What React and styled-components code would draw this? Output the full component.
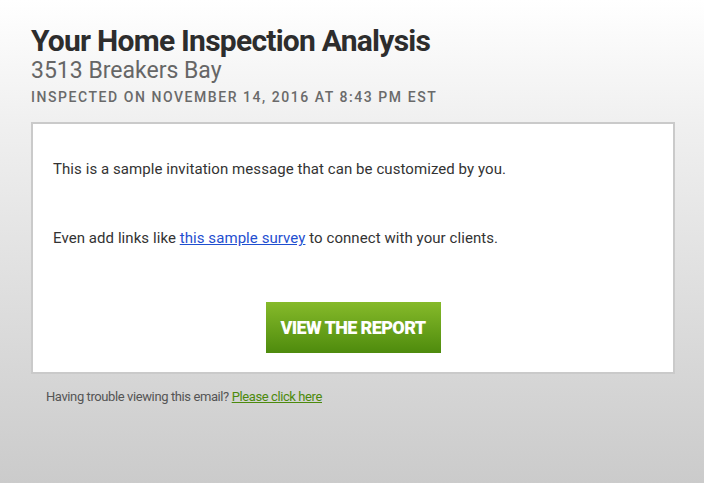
import React from 'react';
import styled, { createGlobalStyle } from 'styled-components';

const GlobalStyle = createGlobalStyle`
  html, body {
    margin: 0;
    padding: 0;
    height: 100%;
  }
  body {
    font-family: Roboto, "Liberation Sans", sans-serif;
    background: #cbcbcb;
  }
  #root {
    min-height: 100%;
  }
`;

const Page = styled.div`
  min-height: 483px;
  box-sizing: border-box;
  padding: 24px 29px 0 31px;
  background: linear-gradient(180deg, #ffffff 0%, #f0f0f0 25%, #cbcbcb 100%);
`;

const Header = styled.header`
  display: flex;
  flex-direction: column;
`;

const Title = styled.h1`
  margin: 0;
  font-size: 30px;
  line-height: 34px;
  font-weight: 700;
  color: #2d2d2d;
  letter-spacing: -0.75px;
`;

const Address = styled.h2`
  margin: 0;
  font-size: 23px;
  line-height: 26px;
  font-weight: 400;
  color: #666666;
  letter-spacing: 0;
`;

const Inspected = styled.p`
  margin: 3px 0 0;
  font-size: 14px;
  line-height: 20px;
  font-weight: 500;
  color: #6a6a6a;
  letter-spacing: 1.55px;
  text-transform: uppercase;
`;

const Card = styled.section`
  margin-top: 15px;
  height: 252px;
  box-sizing: border-box;
  border: 2px solid #cacaca;
  background: #ffffff;
  padding: 34px 20px 0 20px;
  display: flex;
  flex-direction: column;
`;

const Message = styled.p`
  margin: 0 0 ${p => p.$gap || 0}px;
  font-size: 15px;
  line-height: 22px;
  color: #333333;
  letter-spacing: 0.07px;
`;

const Link = styled.a`
  color: ${p => p.$green ? '#4c8a0c' : '#1f4fd0'};
  text-decoration: underline;
`;

const ButtonRow = styled.div`
  display: flex;
  justify-content: center;
  margin-top: 53px;
`;

const ReportButton = styled.a`
  display: flex;
  align-items: center;
  justify-content: center;
  width: 175px;
  height: 51px;
  background: linear-gradient(180deg, #86ba2a 0%, #4e8b0d 100%);
  color: #ffffff;
  font-size: 18px;
  font-weight: 900;
  letter-spacing: -0.6px;
  text-decoration: none;
`;

const Footer = styled.p`
  margin: 14px 0 0 15px;
  font-size: 13px;
  line-height: 18px;
  color: #555555;
  letter-spacing: -0.4px;
`;

const App = () => (
  <>
    <GlobalStyle />
    <Page>
      <Header>
        <Title>Your Home Inspection Analysis</Title>
        <Address>3513 Breakers Bay</Address>
        <Inspected>Inspected on November 14, 2016 at 8:43 PM EST</Inspected>
      </Header>
      <Card>
        <Message $gap={47}>This is a sample invitation message that can be customized by you.</Message>
        <Message>
          Even add links like <Link href="#">this sample survey</Link> to connect with your clients.
        </Message>
        <ButtonRow>
          <ReportButton href="#">VIEW THE REPORT</ReportButton>
        </ButtonRow>
      </Card>
      <Footer>
        Having trouble viewing this email? <Link $green href="#">Please click here</Link>
      </Footer>
    </Page>
  </>
);

export default App;
